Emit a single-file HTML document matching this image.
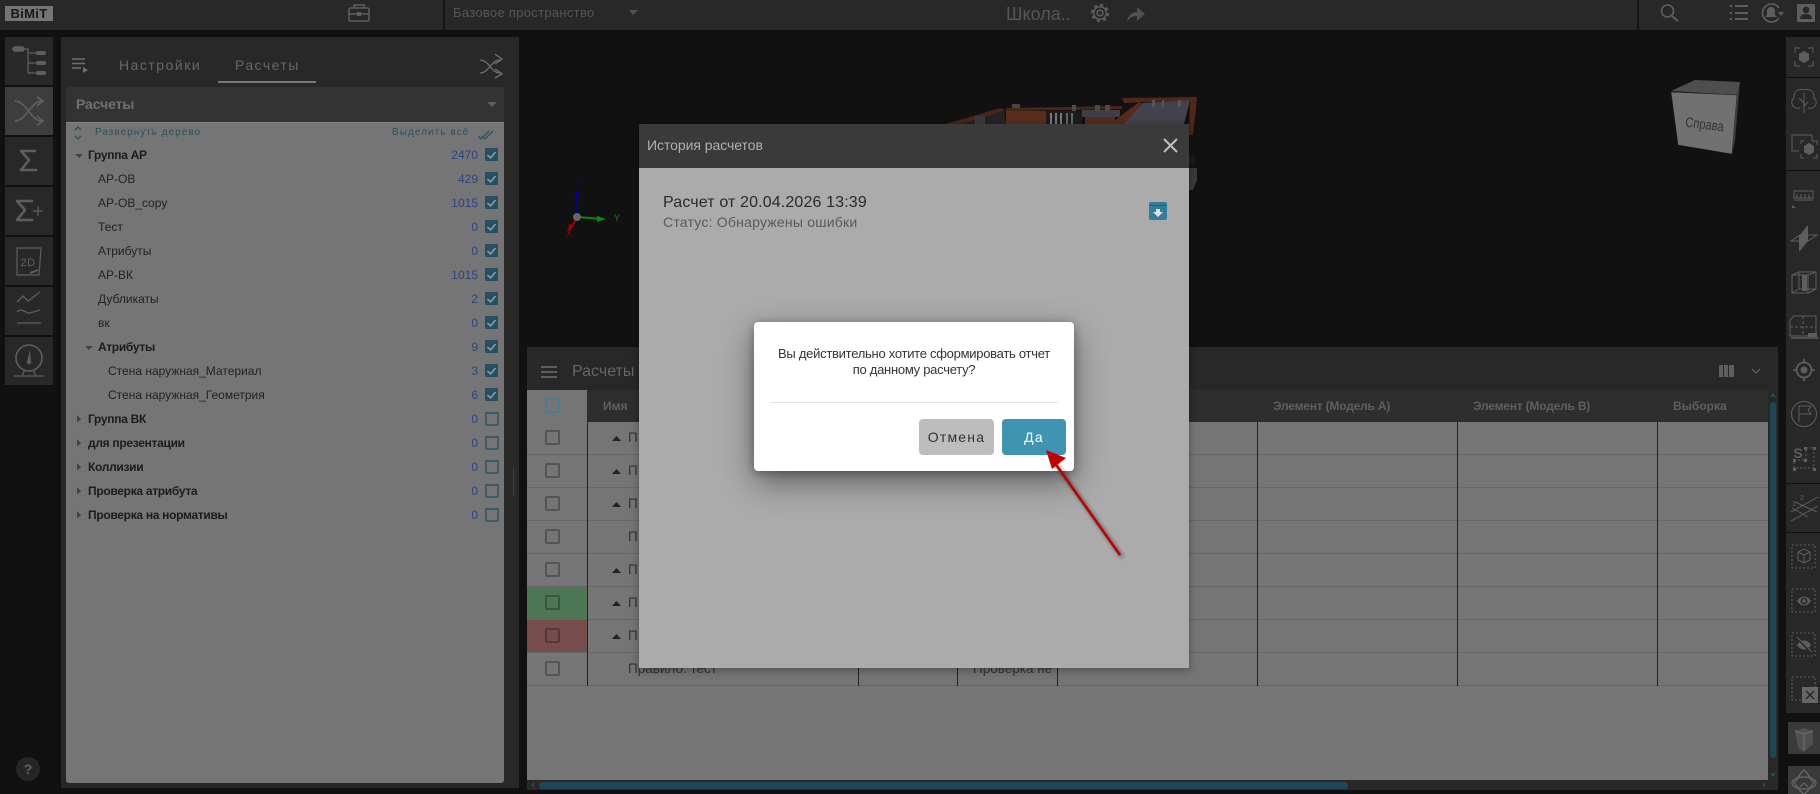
<!DOCTYPE html>
<html lang="ru"><head><meta charset="utf-8"><title>BIMIT</title>
<style>
html,body{margin:0;padding:0;width:1820px;height:794px;overflow:hidden;background:#111;font-family:"Liberation Sans",sans-serif}
.a{position:absolute}
.t{position:absolute;white-space:nowrap;line-height:16px}
.r{font-size:12px;color:#222}
.b{font-weight:bold;color:#1c1c1c;letter-spacing:-.3px}
.n{position:absolute;right:1342px;font-size:12px;line-height:16px;color:#2a4582;text-align:right}
.c{position:absolute;left:485px;width:13px;height:13px;background:#225263;border:0;border-radius:1px}
.u{position:absolute;left:485px;width:10px;height:10px;border:2px solid #3d5d66;border-radius:1px}
.k{position:absolute;left:545px;width:11px;height:11px;border:2px solid #555;border-radius:2px}
.l{position:absolute;left:527px;width:1241px;height:1px;background:#666}
.v{position:absolute;top:422px;height:264px;width:1px;background:#222}
.btn{position:absolute;left:5px;width:48px;height:48px;background:#282828}
.s{position:absolute;left:1786px;width:34px;background:#282828}
svg{position:absolute;left:0;top:0}
</style></head><body>
<!-- top bar -->
<div class="a" style="left:0;top:0;width:1820px;height:30px;background:#282828"></div>
<div class="a" style="left:443px;top:0;width:2px;height:30px;background:#151515"></div>
<div class="a" style="left:1637px;top:0;width:2px;height:30px;background:#151515"></div>
<div class="a" style="left:5px;top:6px;width:48px;height:15px;background:#757575;color:#181818;font:bold 13px/15px 'Liberation Sans',sans-serif;text-align:center;letter-spacing:.3px">BiMiT</div>
<div class="t" style="left:453px;top:5px;font-size:13px;color:#555;letter-spacing:.3px">Базовое пространство</div>
<div class="t" style="left:1006px;top:4px;font-size:18px;line-height:20px;color:#555">Школа..</div>

<!-- left toolbar -->
<div class="btn" style="top:37px"></div>
<div class="btn" style="top:87px;background:#3d3d3d"></div>
<div class="btn" style="top:137px"></div>
<div class="btn" style="top:187px"></div>
<div class="btn" style="top:237px"></div>
<div class="btn" style="top:287px"></div>
<div class="btn" style="top:337px"></div>
<div class="a" style="left:16px;top:757px;width:24px;height:24px;border-radius:12px;background:#262626;color:#626262;font:bold 14px/24px 'Liberation Sans',sans-serif;text-align:center">?</div>

<!-- left panel -->
<div class="a" style="left:61px;top:37px;width:458px;height:751px;background:#282828"></div>
<div class="t" style="left:119px;top:57px;font-size:14px;letter-spacing:1.5px;color:#666">Настройки</div>
<div class="t" style="left:235px;top:57px;font-size:14px;letter-spacing:1.45px;color:#666">Расчеты</div>
<div class="a" style="left:218px;top:81px;width:98px;height:2px;background:#777"></div>
<div class="a" style="left:66px;top:87px;width:438px;height:35px;background:#333;border-radius:3px 3px 0 0"></div>
<div class="t" style="left:76px;top:96px;font-size:14px;font-weight:bold;color:#707070;letter-spacing:-.1px">Расчеты</div>
<div class="a" style="left:66px;top:122px;width:438px;height:661px;background:#757575;border-top:1px solid #808080;border-radius:0 0 3px 3px;box-sizing:border-box"></div>
<div class="t" style="left:95px;top:125px;font-size:10px;letter-spacing:1px;color:#2a525f">Развернуть дерево</div>
<div class="t" style="left:392px;top:125px;font-size:10px;letter-spacing:1.05px;color:#2a525f">Выделить всё</div>
<div class="a" style="left:513px;top:469px;width:1px;height:27px;background:#1f4d5c"></div>

<div class="t r b" style="left:88px;top:147px">Группа АР</div><div class="n" style="top:147px">2470</div><div class="c" style="top:148px"></div>
<div class="t r" style="left:98px;top:171px">АР-ОВ</div><div class="n" style="top:171px">429</div><div class="c" style="top:172px"></div>
<div class="t r" style="left:98px;top:195px">АР-ОВ_copy</div><div class="n" style="top:195px">1015</div><div class="c" style="top:196px"></div>
<div class="t r" style="left:98px;top:219px">Тест</div><div class="n" style="top:219px">0</div><div class="c" style="top:220px"></div>
<div class="t r" style="left:98px;top:243px">Атрибуты</div><div class="n" style="top:243px">0</div><div class="c" style="top:244px"></div>
<div class="t r" style="left:98px;top:267px">АР-ВК</div><div class="n" style="top:267px">1015</div><div class="c" style="top:268px"></div>
<div class="t r" style="left:98px;top:291px">Дубликаты</div><div class="n" style="top:291px">2</div><div class="c" style="top:292px"></div>
<div class="t r" style="left:98px;top:315px">вк</div><div class="n" style="top:315px">0</div><div class="c" style="top:316px"></div>
<div class="t r b" style="left:98px;top:339px">Атрибуты</div><div class="n" style="top:339px">9</div><div class="c" style="top:340px"></div>
<div class="t r" style="left:108px;top:363px">Стена наружная_Материал</div><div class="n" style="top:363px">3</div><div class="c" style="top:364px"></div>
<div class="t r" style="left:108px;top:387px">Стена наружная_Геометрия</div><div class="n" style="top:387px">6</div><div class="c" style="top:388px"></div>
<div class="t r b" style="left:88px;top:411px">Группа ВК</div><div class="n" style="top:411px">0</div><div class="u" style="top:412px"></div>
<div class="t r b" style="left:88px;top:435px">для презентации</div><div class="n" style="top:435px">0</div><div class="u" style="top:436px"></div>
<div class="t r b" style="left:88px;top:459px">Коллизии</div><div class="n" style="top:459px">0</div><div class="u" style="top:460px"></div>
<div class="t r b" style="left:88px;top:483px">Проверка атрибута</div><div class="n" style="top:483px">0</div><div class="u" style="top:484px"></div>
<div class="t r b" style="left:88px;top:507px">Проверка на нормативы</div><div class="n" style="top:507px">0</div><div class="u" style="top:508px"></div>

<!-- table -->
<div class="a" style="left:527px;top:347px;width:1251px;height:443px;background:#282828"></div>
<div class="a" style="left:527px;top:390px;width:1241px;height:32px;background:#2e2e2e"></div>
<div class="a" style="left:527px;top:390px;width:60px;height:32px;background:#757575"></div>
<div class="a" style="left:527px;top:422px;width:1241px;height:358px;background:#757575"></div>
<div class="a" style="left:527px;top:587px;width:60px;height:32px;background:#4d7655"></div>
<div class="a" style="left:527px;top:620px;width:60px;height:32px;background:#774c4c"></div>
<div class="t" style="left:572px;top:364px;font-size:16px;color:#666">Расчеты</div>
<div class="t" style="left:603px;top:398px;font-size:12px;font-weight:bold;color:#5f5f5f">Имя</div>
<div class="t" style="left:1273px;top:398px;font-size:12px;font-weight:bold;color:#5f5f5f;letter-spacing:-.2px">Элемент (Модель А)</div>
<div class="t" style="left:1473px;top:398px;font-size:12px;font-weight:bold;color:#5f5f5f;letter-spacing:-.2px">Элемент (Модель В)</div>
<div class="t" style="left:1673px;top:398px;font-size:12px;font-weight:bold;color:#5f5f5f">Выборка</div>
<div class="l" style="top:454px"></div><div class="l" style="top:487px"></div><div class="l" style="top:520px"></div><div class="l" style="top:553px"></div><div class="l" style="top:586px"></div><div class="l" style="top:619px"></div><div class="l" style="top:652px"></div><div class="l" style="top:685px"></div>
<div class="v" style="left:587px"></div><div class="v" style="left:858px"></div><div class="v" style="left:957px"></div><div class="v" style="left:1057px"></div><div class="v" style="left:1257px"></div><div class="v" style="left:1457px"></div><div class="v" style="left:1657px"></div>
<div class="k" style="top:398px;border-color:#4a7d90"></div>
<div class="k" style="top:430px"></div><div class="k" style="top:463px"></div><div class="k" style="top:496px"></div><div class="k" style="top:529px"></div><div class="k" style="top:562px"></div><div class="k" style="top:595px;border-color:#3c523f"></div><div class="k" style="top:628px;border-color:#523a3a"></div><div class="k" style="top:661px"></div>
<div class="t" style="left:628px;top:661px;font-size:13.5px;color:#333">Правило: тест</div>
<div class="t" style="left:973px;top:661px;font-size:13.5px;color:#333;width:84px;overflow:hidden">Проверка не</div>
<div class="t" style="left:628px;top:430px;font-size:13.5px;color:#333">П</div>
<div class="t" style="left:628px;top:463px;font-size:13.5px;color:#333">П</div>
<div class="t" style="left:628px;top:496px;font-size:13.5px;color:#333">П</div>
<div class="t" style="left:628px;top:529px;font-size:13.5px;color:#333">П</div>
<div class="t" style="left:628px;top:562px;font-size:13.5px;color:#333">П</div>
<div class="t" style="left:628px;top:595px;font-size:13.5px;color:#333">П</div>
<div class="t" style="left:628px;top:628px;font-size:13.5px;color:#333">П</div>
<div class="a" style="left:1770px;top:402px;width:6px;height:356px;background:#1d4756;border-radius:3px"></div>
<div class="a" style="left:539px;top:782px;width:809px;height:7px;background:#1d4756;border-radius:3px"></div>

<!-- right toolbar -->
<div class="s" style="top:37px;height:40px"></div>
<div class="s" style="top:78px;height:92px"></div>
<div class="s" style="top:171px;height:312px"></div>
<div class="s" style="top:484px;height:48px"></div>
<div class="s" style="top:533px;height:180px"></div>
<div class="a" style="left:1788px;top:722px;width:32px;height:32px;background:#3a3a3a"></div>
<div class="a" style="left:1788px;top:766px;width:32px;height:28px;background:#3a3a3a"></div>

<!-- icons + viewport -->
<svg width="1820" height="794" viewBox="0 0 1820 794" fill="none" stroke="#5e5e5e" stroke-width="1.2">
<!-- model -->
<g stroke="none">
<polygon points="946,124 1000,108 1006,110 962,124" fill="#4a2618"/>
<polygon points="960,124 1004,111 1006,124" fill="#242424"/>
<rect x="975" y="116" width="10" height="8" fill="#3a3a3a"/>
<polygon points="1006,108 1122,106 1122,109 1006,111" fill="#4a2618"/>
<rect x="1006" y="111" width="40" height="13" fill="#5a2c1c"/>
<rect x="1012" y="104" width="8" height="4" fill="#444"/>
<rect x="1046" y="111" width="36" height="13" fill="#1c1c1c"/>
<rect x="1050" y="113" width="2" height="11" fill="#777"/><rect x="1055" y="113" width="2" height="11" fill="#777"/><rect x="1060" y="113" width="2" height="11" fill="#777"/><rect x="1066" y="113" width="2" height="11" fill="#666"/><rect x="1071" y="113" width="2" height="11" fill="#666"/>
<rect x="1082" y="110" width="38" height="7" fill="#3e3e46"/>
<rect x="1085" y="117" width="30" height="7" fill="#552b1b"/>
<rect x="1072" y="105" width="4" height="6" fill="#4a4a4a"/><rect x="1095" y="105" width="5" height="6" fill="#4a4a4a"/><rect x="1105" y="105" width="5" height="6" fill="#4a4a4a"/>
<polygon points="1122,98 1197,97 1196,100 1124,103" fill="#4f2818"/>
<polygon points="1110,124 1139,102 1143,104 1124,124" fill="#552b1b"/>
<polygon points="1143,103 1190,100 1184,124 1124,124" fill="#42424c"/>
<rect x="1152" y="100" width="3" height="7" fill="#555"/><rect x="1162" y="100" width="2" height="7" fill="#555"/><rect x="1178" y="100" width="3" height="7" fill="#555"/>
<polygon points="1190,100 1197,98 1193,135 1189,135" fill="#4f2818"/>
<rect x="1189" y="155" width="6" height="10" fill="#1a1a1a"/>
<polygon points="1189,168 1197,168 1197,180 1193,190 1189,190" fill="#3a3a3a"/>
</g>
<!-- gizmo -->
<path d="M577 217V196" stroke="#0000a0" stroke-width="1.5"/><path d="M577 190l-3 8h6z" fill="#0000a0" stroke="none"/>
<path d="M577 217l25 2" stroke="#0a8a0a" stroke-width="2"/><path d="M606 219l-9-3v6z" fill="#0a8a0a" stroke="none"/>
<path d="M577 217l-7 13" stroke="#a00000" stroke-width="2"/><path d="M568 232l1-8 5 2z" fill="#a00000" stroke="none"/>
<circle cx="577" cy="217" r="4" fill="#666" stroke="none"/>
<text x="580" y="184" font-family="Liberation Sans" font-size="9" fill="#0000a0" stroke="none" text-anchor="middle">Z</text>
<text x="614" y="221" font-family="Liberation Sans" font-size="9" fill="#0a8a0a" stroke="none">Y</text>
<text x="569" y="236" font-family="Liberation Sans" font-size="8" fill="#a00000" stroke="none" text-anchor="middle">X</text>
<!-- view cube -->
<polygon points="1671,91 1695,80 1740,82 1737,95" fill="#4e4e4e" stroke="none"/>
<polygon points="1671,92 1737,95 1732,154 1678,145" fill="#717171" stroke="#222" stroke-width=".6"/>
<polygon points="1737,95 1740,82 1735,140 1732,154" fill="#3e3e3e" stroke="none"/>
<text transform="translate(1704 129) rotate(7) scale(.8 1)" font-family="Liberation Sans" font-size="14" fill="#333" stroke="none" text-anchor="middle">Справа</text>

<!-- top icons -->
<g stroke-width="1.6">
<rect x="349" y="8" width="20" height="13" rx="1.5"/><path d="M354 8V5h10v3M349 14h20"/><path d="M357 12h4v4h-4z" fill="#5e5e5e" stroke="none"/>
<circle cx="1667.500" cy="11" r="6"/><path d="M1672 16l6 5" stroke-width="2"/>
<path d="M1735 6h13M1735 13h13M1735 19h13" stroke-width="2"/><path d="M1730 6h2M1730 13h2M1730 19h2" stroke-width="2"/>
<path d="M1779 8a9 9 0 1 0 0 10"/>
</g>
<path d="M1771 7c-3 0-4 2-4 5v3l-2 2h12l-2-2v-3c0-3-1-5-4-5z" fill="#5e5e5e" stroke="none"/><path d="M1778 12l3 4 3-4z" fill="#5e5e5e" stroke="none"/>
<rect x="1797" y="4" width="18" height="18" rx="1" fill="#5e5e5e" stroke="none"/><circle cx="1806" cy="10" r="3.400" fill="#282828" stroke="none"/><path d="M1800 19c0-4 3-5 6-5s6 1 6 5z" fill="#282828" stroke="none"/>
<path d="M629 10l4 5 5-5z" fill="#505050" stroke="none"/>
<!-- gear -->
<circle cx="1100" cy="13" r="6.300" stroke-width="1.500"/><circle cx="1100" cy="13" r="2.900" stroke-width="1.500"/><circle cx="1100" cy="13" r="8" stroke-width="2.200" stroke-dasharray="3 3.280"/>
<path d="M1127 22c1-7 5-10 10-10V7l8 7-8 7v-5c-4 0-7 1-10 6z" fill="#505050" stroke="none"/>

<!-- left toolbar icons -->
<path d="M15 49h7" stroke-width="5.500" stroke-linecap="round"/><path d="M22 49h6v24M28 53h8M28 63h8M28 73h8" stroke-width="1.300"/><path d="M38 53h6M38 63h6M38 73h6" stroke-width="4" stroke-linecap="round"/>
<g stroke-width="1.700">
<path d="M15 101c11 0 16 20 27 20M15 121c11 0 16-20 27-20"/><path d="M37 97l6 4-6 5M37 116l6 5-6 4"/>
</g>
<path d="M35 151H21l8 9-8 10h15" stroke-width="2.600" stroke-linecap="round" stroke-linejoin="round"/>
<path d="M32 201H17l8 9-8 10h15" stroke-width="2.600" stroke-linecap="round" stroke-linejoin="round"/><path d="M38 206v10M33 211h10" stroke-width="1.200"/>
<path d="M17 248h24l-2 27H17z"/><path d="M30 273l8-3" stroke-width="1.800"/>
<text x="28" y="266" font-family="Liberation Sans" font-size="11" fill="#5e5e5e" stroke="none" letter-spacing=".5" text-anchor="middle">2D</text>
<path d="M17 302l6-6 5 5 12-9M17 312c5-5 9 2 13 1l10-3M17 323h24" stroke-width="1.300"/>
<circle cx="29" cy="358" r="13" stroke-width="1.600"/><path d="M30 350l-3 12h4z" fill="#5e5e5e" stroke="none"/><circle cx="29" cy="362" r="2.200" fill="#5e5e5e" stroke="none"/><path d="M24 371c0 2-1 3-2 4M34 371c0 2 1 3 2 4M14 376h30" stroke-width="1.300"/>

<!-- panel icons -->
<path d="M72 59h13M72 63.500h13M72 68h9" stroke-width="1.500" stroke="#707070"/><path d="M83 67l5 3-5 3z" fill="#707070" stroke="none"/>
<g stroke="#707070" stroke-width="1.300"><path d="M480 60c9 0 11 13 20 13M480 73c9 0 11-13 20-13"/><path d="M495 54l7 5-7 5M495 69l7 5-7 4"/></g>
<path d="M487 102l5 5 5-5z" fill="#5e5e5e" stroke="none"/>
<g stroke="#2a525f" stroke-width="1.300"><path d="M75 130l3-3 3 3M75 136l3 3 3-3"/><path d="M478 136l3 3 8-8M482 136l3 3 8-8"/></g>
<g fill="#444" stroke="none">
<path d="M75 154h8l-4 4z"/><path d="M85 346h8l-4 4z"/>
<path d="M77 415l4 4-4 4zM77 439l4 4-4 4zM77 463l4 4-4 4zM77 487l4 4-4 4zM77 511l4 4-4 4z"/>
</g>
<g stroke="#a0a0a0" stroke-width="1.400">
<path d="M487.500 155l3 3 5-6M487.500 179l3 3 5-6M487.500 203l3 3 5-6M487.500 227l3 3 5-6M487.500 251l3 3 5-6M487.500 275l3 3 5-6M487.500 299l3 3 5-6M487.500 323l3 3 5-6M487.500 347l3 3 5-6M487.500 371l3 3 5-6M487.500 395l3 3 5-6"/>
</g>

<!-- table toolbar -->
<path d="M541 367h16M541 372h16M541 377h16" stroke-width="1.500" stroke="#707070"/>
<path d="M1719 365h4v12h-4zM1724 365h4v12h-4zM1729 365h5v12h-5z" fill="#5e5e5e" stroke="none"/>
<path d="M1752 369l4 4 4-4" stroke-width="1.300"/>
<g fill="#222" stroke="none">
<path d="M612 441h9l-4.500-5zM612 474h9l-4.500-5zM612 507h9l-4.500-5zM612 573h9l-4.500-5zM612 606h9l-4.500-5zM612 639h9l-4.500-5z"/>
</g>
<g fill="#1f4d5c" stroke="none"><path d="M1770 397h6l-3-4zM1770 773h6l-3 4z"/><path d="M534 782v6l-3-3zM1763 782v6l3-3z"/></g>

<!-- right toolbar icons -->
<g stroke-width="1">
<path d="M1795 53v-5h5M1808 48h5v5M1813 61v5h-5M1800 66h-5v-5"/><path d="M1804 51l5 3v6l-5 3-5-3v-6z" fill="#5e5e5e" stroke="none"/>
<path d="M1804 113v-20M1804 103l-5-5M1804 106l4-4"/><path d="M1800 108c-7 2-11-6-6-10-1-7 5-10 10-8 5-2 11 1 10 8 5 4 1 12-6 10"/>
<path d="M1812 135h-20v16h7M1812 135v6"/><path d="M1801 144v-3h3M1812 141h5v4M1817 154v4h-4M1804 158h-3v-4"/><path d="M1809 143l5 3v6l-5 3-5-3v-6z" fill="#5e5e5e" stroke="none"/>
<rect x="1794" y="191" width="19" height="7"/><path d="M1794 200h19M1797 194v4M1801 194v4M1805 194v4M1809 194v4"/>
<path d="M1792 205l4 3h-4z" fill="#5e5e5e" stroke="none"/>
<path d="M1791 241l9-6h17l-9 6z"/><path d="M1808 225v16l-9 11v-16z" fill="#5e5e5e" stroke="none"/>
<rect x="1792" y="275" width="16" height="18"/><rect x="1799" y="272" width="17" height="17"/><path d="M1792 275l7-3M1808 275l8-3M1792 293l7-4M1808 293l8-4"/><rect x="1802" y="275" width="5" height="16" fill="#5e5e5e" stroke="none"/>
<path d="M1790 320l4-4h22v20h-26z"/><path d="M1790 327h26M1803 316v20" stroke-dasharray="3 2"/><rect x="1808" y="333" width="9" height="4" fill="#5e5e5e" stroke="none"/><path d="M1791 338h27" stroke-width="1.500"/>
<circle cx="1804" cy="370" r="7.500" stroke-width="1.800"/><circle cx="1804" cy="370" r="3.500" fill="#5e5e5e" stroke="none"/><path d="M1804 359v4M1804 377v4M1793 370h4M1811 370h4" stroke-width="1.800"/>
<circle cx="1804" cy="414" r="12.500"/><path d="M1799 422v-16h12l-3 4 3 4h-12"/>
<text x="1798" y="458" font-family="Liberation Sans" font-size="14" font-weight="bold" fill="#5e5e5e" stroke="none" text-anchor="middle">S</text>
<path d="M1806 448h8v20h-20v-8h12z" stroke-dasharray="2 2"/><rect x="1804" y="447" width="3" height="3" fill="#5e5e5e" stroke="none"/><rect x="1813" y="447" width="3" height="3" fill="#5e5e5e" stroke="none"/><rect x="1793" y="459" width="3" height="3" fill="#5e5e5e" stroke="none"/><rect x="1804" y="459" width="3" height="3" fill="#5e5e5e" stroke="none"/><rect x="1793" y="468" width="3" height="3" fill="#5e5e5e" stroke="none"/><rect x="1813" y="468" width="3" height="3" fill="#5e5e5e" stroke="none"/>
<path d="M1791 512l27-15M1791 521l27-15M1795 502l22 10M1792 508l16 9"/>
<text x="1792" y="506" font-family="Liberation Sans" font-size="7" fill="#5e5e5e" stroke="none">1</text><text x="1800" y="500" font-family="Liberation Sans" font-size="7" fill="#5e5e5e" stroke="none">2</text>
<rect x="1792" y="545" width="23" height="23" stroke-dasharray="2 2"/><path d="M1804 549l6 3v8l-6 3-6-3v-8zM1798 552l6 3 6-3M1804 555v8"/>
<rect x="1792" y="589" width="23" height="23" stroke-dasharray="2 2"/><path d="M1797 601c4-6 10-6 14 0-4 6-10 6-14 0z" fill="#5e5e5e" stroke="none"/><circle cx="1804" cy="601" r="3.400" fill="#282828" stroke="none"/><circle cx="1804" cy="601" r="1.800" fill="#5e5e5e" stroke="none"/>
<rect x="1792" y="633" width="23" height="23" stroke-dasharray="2 2"/><path d="M1797 645c4-6 10-6 14 0-4 6-10 6-14 0z" fill="#5e5e5e" stroke="none"/><path d="M1797 638l14 14" stroke="#282828" stroke-width="2.500"/><path d="M1797 637l15 15"/>
<rect x="1792" y="677" width="23" height="23" stroke-dasharray="2 2"/><rect x="1802" y="687" width="16" height="16" fill="#666" stroke="none"/><path d="M1806 691l8 8M1814 691l-8 8" stroke="#222" stroke-width="1.300"/>
</g>
<path d="M1795 731l9-3 9 3v13l-9 8-6-4z" fill="#505050" stroke="none"/><path d="M1795 731l9 3 9-3M1804 734v17" stroke="#6a6a6a"/>
<path d="M1804 770c5 4 5 8 10 13-5 5-5 8-10 11-5-3-5-6-10-11 5-5 5-9 10-13z" stroke="#6a6a6a"/><ellipse cx="1804" cy="783" rx="12" ry="6" stroke="#6a6a6a"/><path d="M1804 783l-4 4M1804 783l4 4" stroke="#6a6a6a"/>
</svg>

<!-- history dialog -->
<div class="a" style="left:639px;top:124px;width:550px;height:544px;background:#ababab;box-shadow:0 2px 8px rgba(0,0,0,.35)">
<div class="a" style="left:0;top:0;width:550px;height:44px;background:#3a3a3a"></div>
<div class="t" style="left:8px;top:13px;font-size:14px;color:#b0b0b0;letter-spacing:-.05px">История расчетов</div>
<svg width="18" height="18" style="left:523px;top:13px" viewBox="0 0 18 18"><path d="M2 2l13 13M15 2L2 15" stroke="#c0c0c0" stroke-width="2" fill="none"/></svg>
<div class="t" style="left:24px;top:70px;font-size:16px;line-height:18px;color:#2a2a2a;letter-spacing:.14px">Расчет от 20.04.2026 13:39</div>
<div class="t" style="left:24px;top:90px;font-size:14px;color:#5a5a5a;letter-spacing:.22px">Статус: Обнаружены ошибки</div>
<div class="a" style="left:510px;top:78px;width:18px;height:18px;background:#2f7f9c;border-radius:2px"></div>
<div class="a" style="left:510px;top:81px;width:18px;height:1px;background:#1f5f78"></div>
<svg width="18" height="18" style="left:510px;top:78px" viewBox="0 0 18 18"><path d="M7 7h4v3h3l-5 5-5-5h3z" fill="#e0e0e0"/></svg>
</div>

<!-- confirm dialog -->
<div class="a" style="left:754px;top:322px;width:320px;height:149px;background:#fff;border-radius:4px;box-shadow:0 12px 32px rgba(0,0,0,.42),0 2px 10px rgba(0,0,0,.3)">
<div class="a" style="left:0;top:24px;width:320px;text-align:center;font-size:13px;line-height:16px;color:#333;letter-spacing:-.27px">Вы действительно хотите сформировать отчет<br>по данному расчету?</div>
<div class="a" style="left:16px;top:80px;width:288px;height:1px;background:#e4e4e4"></div>
<div class="a" style="left:165px;top:97px;width:75px;height:36px;background:#bdbdbd;border-radius:4px;color:#333;font-size:14px;line-height:36px;text-align:center;letter-spacing:1.2px">Отмена</div>
<div class="a" style="left:248px;top:97px;width:64px;height:36px;background:#3f94b2;border-radius:4px;color:#fff;font-size:14px;line-height:36px;text-align:center;letter-spacing:1.2px">Да</div>
</div>

<!-- annotation arrow -->
<svg width="1820" height="794" viewBox="0 0 1820 794" fill="none">
<defs><filter id="sh" x="-20%" y="-20%" width="140%" height="140%"><feGaussianBlur stdDeviation="2"/></filter></defs>
<path d="M1122 557L1054 461" stroke="#000" stroke-width="3" opacity=".5" filter="url(#sh)"/>
<path d="M1120 555L1052 459" stroke="#c00000" stroke-width="2.600"/>
<path d="M1046 450l20 8-14 11z" fill="#c00000"/>
</svg>
</body></html>
